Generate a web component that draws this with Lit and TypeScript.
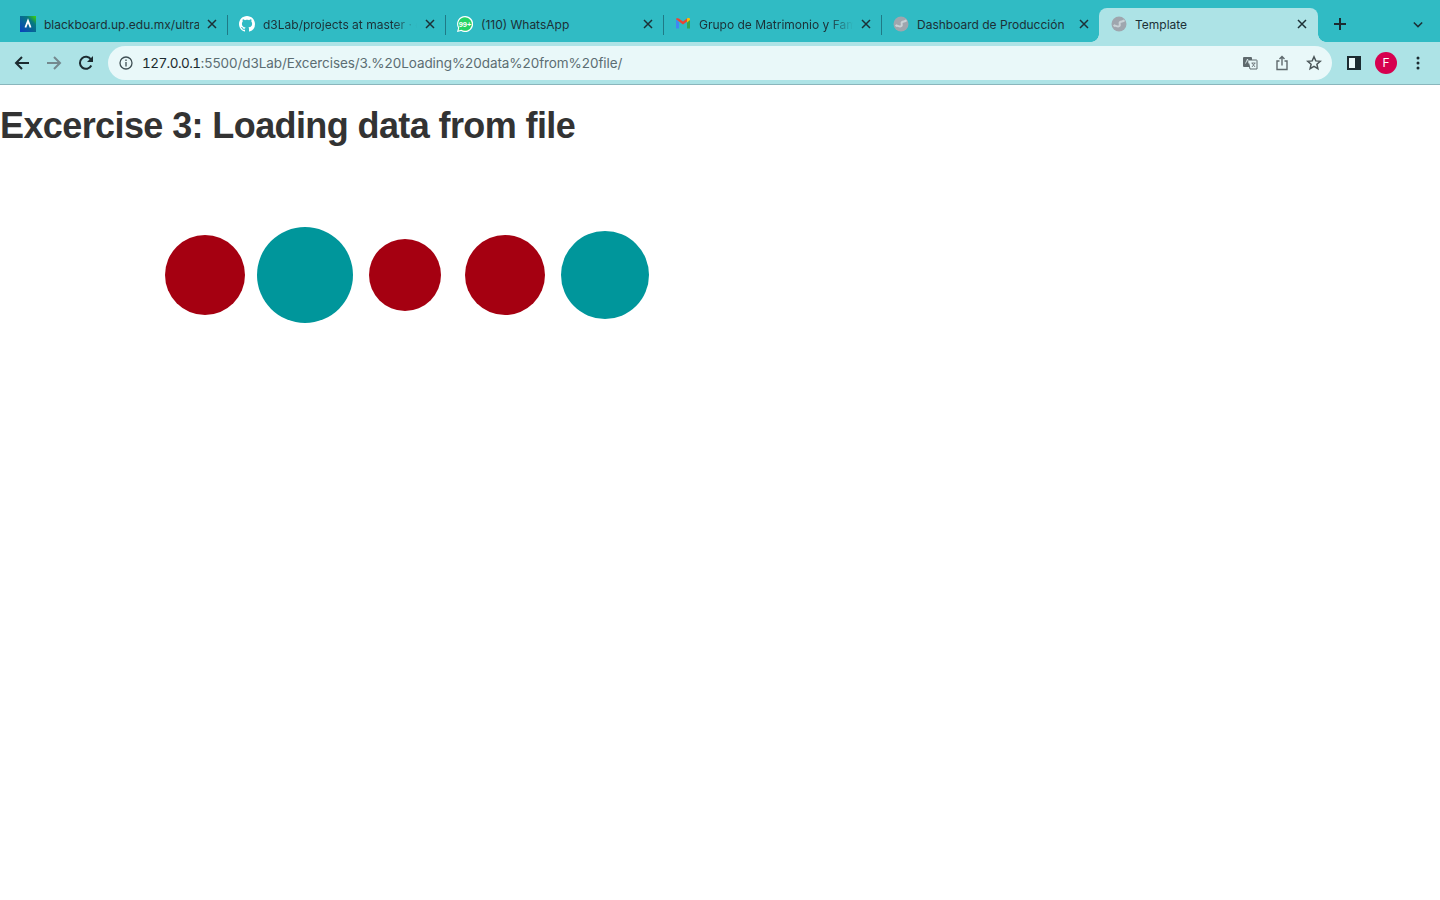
import { LitElement, html, css, svg } from 'lit';
import { customElement } from 'lit/decorators.js';
import { classMap } from 'lit/directives/class-map.js';

const blackboardIcon = html`<svg viewBox="0 0 16 16" width="16" height="16">
  <defs>
    <linearGradient id="bb" x1="0" y1="1" x2="1" y2="0">
      <stop offset="0" stop-color="#0a3fc0" />
      <stop offset="0.7" stop-color="#067a80" />
      <stop offset="1" stop-color="#3fd800" />
    </linearGradient>
  </defs>
  <rect width="16" height="16" fill="url(#bb)" />
  <path d="M5.400 11.500 8 4.800l2.600 6.700" fill="none" stroke="#fff" stroke-width="1.800" />
</svg>`;

const githubIcon = html`<svg viewBox="0 0 16 16" width="16" height="16">
  <path
    fill="#fff"
    d="M8 0C3.58 0 0 3.58 0 8c0 3.54 2.29 6.53 5.47 7.59.4.07.55-.17.55-.38 0-.19-.01-.82-.01-1.49-2.01.37-2.53-.49-2.69-.94-.09-.23-.48-.94-.82-1.13-.28-.15-.68-.52-.01-.53.63-.01 1.08.58 1.23.82.72 1.21 1.87.87 2.33.66.07-.52.28-.87.51-1.07-1.78-.2-3.64-.89-3.64-3.95 0-.87.31-1.59.82-2.15-.08-.2-.36-1.02.08-2.12 0 0 .67-.21 2.2.82.64-.18 1.32-.27 2-.27.68 0 1.36.09 2 .27 1.53-1.04 2.2-.82 2.2-.82.44 1.1.16 1.92.08 2.12.51.56.82 1.27.82 2.15 0 3.07-1.87 3.75-3.65 3.95.29.25.54.73.54 1.48 0 1.07-.01 1.93-.01 2.2 0 .21.15.46.55.38A8.013 8.013 0 0016 8c0-4.42-3.58-8-8-8z"
  />
</svg>`;

const whatsappIcon = html`<svg viewBox="0 0 16 16" width="16" height="16">
  <path d="M8 0a8 8 0 0 0-6.900 12L0 16l4.100-1.100A8 8 0 1 0 8 0z" fill="#fff" />
  <path d="M8 1.200a6.800 6.800 0 0 0-5.700 10.500l-.7 2.700 2.700-.7A6.800 6.800 0 1 0 8 1.200z" fill="#25d366" />
  <text x="8" y="10.600" text-anchor="middle" font-family="Liberation Sans" font-size="7.500" font-weight="700" fill="#fff">99+</text>
</svg>`;

const gmailIcon = html`<svg viewBox="0 0 16 16" width="16" height="16">
  <path d="M1 3.200v9.300h3V6.400z" fill="#4285f4" />
  <path d="M12 6.400v6.100h3V3.200z" fill="#34a853" />
  <path d="M1 3.200 8 8.600l4-3.100V2.600l-4 3-2.800-2.200C3.600 2 1 2 1 3.200z" fill="#ea4335" />
  <path d="M12 2.600v3.800l3-2.300V3.200c0-1-1.600-1.600-3-.6z" fill="#fbbc04" />
</svg>`;

const globeIcon = html`<svg viewBox="0 0 16 16" width="16" height="16">
  <circle cx="8" cy="8" r="7.500" fill="#9fa6ae" />
  <path
    d="M13.500 4.200C12 5.800 10.500 5.200 9 6.200 7.800 7 9.500 8.600 8.500 10 7.500 11.300 5 9.800 3.600 9.400l-1 .8"
    fill="none"
    stroke="#c9d2d6"
    stroke-width="2"
  />
</svg>`;

interface Tab {
  title: string;
  icon: unknown;
  active?: boolean;
  fade?: boolean;
}

const tabs: Tab[] = [
  { title: 'blackboard.up.edu.mx/ultra', icon: blackboardIcon },
  { title: 'd3Lab/projects at master · d3Lab', icon: githubIcon, fade: true },
  { title: '(110) WhatsApp', icon: whatsappIcon },
  { title: 'Grupo de Matrimonio y Familia', icon: gmailIcon, fade: true },
  { title: 'Dashboard de Producción', icon: globeIcon },
  { title: 'Template', icon: globeIcon, active: true },
];

const circles = [
  { cx: 205, r: 40, fill: '#a50011' },
  { cx: 305, r: 48, fill: '#00969b' },
  { cx: 405, r: 36, fill: '#a50011' },
  { cx: 505, r: 40, fill: '#a50011' },
  { cx: 605, r: 44, fill: '#00969b' },
];

@customElement('app-root')
export class AppRoot extends LitElement {
  static styles = css`
    :host {
      display: block;
      min-height: 900px;
      background: #fff;
      font-family: Inter, 'Liberation Sans', sans-serif;
    }

    /* Tab strip */
    .strip {
      display: flex;
      align-items: flex-end;
      height: 42px;
      padding-left: 9px;
      background: #30bbc4;
      box-sizing: border-box;
    }
    .tab {
      position: relative;
      display: flex;
      align-items: center;
      flex: none;
      width: 218px;
      height: 34px;
      padding: 0 10px 2px 11px;
      box-sizing: border-box;
      color: #1c3036;
      font-size: 12px;
    }
    .tab + .tab {
      padding-left: 12px;
    }
    .tab + .tab::before {
      content: '';
      position: absolute;
      left: 0;
      top: 7px;
      height: 20px;
      width: 1px;
      background: #1f7a86;
    }
    .tab.active {
      width: 219px;
      padding-right: 11px;
      background: #ade3e6;
      border-radius: 8px 8px 0 0;
    }
    .tab.active::before,
    .tab.active::after {
      content: '';
      position: absolute;
      bottom: 0;
      top: auto;
      width: 8px;
      height: 8px;
      background: radial-gradient(circle at 0 0, #30bbc4 7.5px, #ade3e6 8px);
    }
    .tab.active::before {
      left: -8px;
    }
    .tab.active::after {
      right: -8px;
      background: radial-gradient(circle at 100% 0, #30bbc4 7.5px, #ade3e6 8px);
    }
    .favicon {
      display: flex;
      flex: none;
      width: 16px;
      height: 16px;
      margin-right: 8px;
    }
    .title {
      flex: 1;
      min-width: 0;
      white-space: nowrap;
      overflow: hidden;
    }
    .title.fade {
      -webkit-mask-image: linear-gradient(to right, #000 calc(100% - 24px), transparent);
      mask-image: linear-gradient(to right, #000 calc(100% - 24px), transparent);
    }
    .close {
      display: flex;
      flex: none;
      width: 10px;
      height: 10px;
      margin-left: 8px;
    }
    .strip-end {
      display: flex;
      align-items: center;
      flex: 1;
      height: 34px;
      padding: 0 17px 2px 15px;
      box-sizing: border-box;
      justify-content: space-between;
    }

    /* Toolbar */
    .toolbar {
      display: flex;
      align-items: center;
      height: 43px;
      padding: 0 12px 1px 12px;
      box-sizing: border-box;
      background: #ade3e6;
      border-bottom: 1px solid #89b6bc;
    }
    .nav {
      display: flex;
      align-items: center;
      gap: 12px;
      margin-right: 12px;
    }
    .btn {
      display: flex;
      align-items: center;
      justify-content: center;
      width: 20px;
      height: 20px;
    }
    .omnibox {
      display: flex;
      align-items: center;
      flex: 1;
      height: 34px;
      padding: 0 8px 0 10px;
      border-radius: 17px;
      background: #e9f8f9;
      font-size: 13.5px;
      letter-spacing: -0.07px;
      color: #5c6d72;
    }
    .url {
      flex: 1;
      margin-left: 8px;
      white-space: nowrap;
    }
    .url b {
      font-weight: 400;
      color: #1c2b30;
      font-feature-settings: 'tnum';
      letter-spacing: -0.55px;
    }
    .omni-actions {
      display: flex;
      gap: 12px;
    }
    .side {
      display: flex;
      align-items: center;
      gap: 11px;
      margin-left: 12px;
    }
    .avatar {
      display: flex;
      align-items: center;
      justify-content: center;
      width: 22px;
      height: 22px;
      border-radius: 50%;
      background: #d6004f;
      color: #fff;
      font-size: 12px;
    }

    /* Page */
    h1 {
      margin: 0;
      padding-top: 18px;
      font-family: 'Liberation Sans', Arial, sans-serif;
      font-size: 36px;
      font-weight: 700;
      line-height: 45px;
      letter-spacing: -0.6px;
      color: #333;
    }
    .chart {
      display: block;
      margin-top: 60px;
    }
  `;

  private renderTab(tab: Tab) {
    return html`<div class=${classMap({ tab: true, active: !!tab.active })}>
      <span class="favicon">${tab.icon}</span>
      <span class=${classMap({ title: true, fade: !!tab.fade })}>${tab.title}</span>
      <span class="close">
        <svg viewBox="0 0 10 10" width="10" height="10">
          <path d="M1 1l8 8M9 1l-8 8" stroke="#1c3036" stroke-width="1.500" fill="none" />
        </svg>
      </span>
    </div>`;
  }

  render() {
    return html`
      <div class="strip">
        ${tabs.map((t) => this.renderTab(t))}
        <div class="strip-end">
          <svg viewBox="0 0 14 14" width="14" height="14">
            <path d="M7 1v12M1 7h12" stroke="#1c2b30" stroke-width="2" fill="none" />
          </svg>
          <svg viewBox="0 0 12 8" width="10" height="7">
            <path d="M1 1.500l5 5 5-5" stroke="#1c3036" stroke-width="1.800" fill="none" />
          </svg>
        </div>
      </div>
      <div class="toolbar">
        <div class="nav">
          <span class="btn">
            <svg viewBox="0 0 16 16" width="16" height="16">
              <path d="M15 8H2M8 2 2 8l6 6" stroke="#1c2b30" stroke-width="2" fill="none" />
            </svg>
          </span>
          <span class="btn">
            <svg viewBox="0 0 16 16" width="16" height="16">
              <path d="M1 8h13M8 2l6 6-6 6" stroke="#74898e" stroke-width="2" fill="none" />
            </svg>
          </span>
          <span class="btn">
            <svg viewBox="0 0 16 16" width="16" height="16">
              <path d="M13.300 10.500A6 6 0 1 1 13 4.600" stroke="#1c2b30" stroke-width="2" fill="none" />
              <path d="M15 1v6H9z" fill="#1c2b30" />
            </svg>
          </span>
        </div>
        <div class="omnibox">
          <svg viewBox="0 0 16 16" width="16" height="16">
            <circle cx="8" cy="8" r="6" stroke="#3f4f54" stroke-width="1.300" fill="none" />
            <path d="M8 7v4.500M8 4.500v1.500" stroke="#3f4f54" stroke-width="1.300" fill="none" />
          </svg>
          <span class="url"><b>127.0.0.1</b>:5500/d3Lab/Excercises/3.%20Loading%20data%20from%20file/</span>
          <div class="omni-actions">
            <span class="btn">
              <svg viewBox="0 0 16 16" width="16" height="16">
                <rect x="1" y="2" width="9" height="10" rx="1" fill="#5f6a6e" />
                <path d="M6 5h8.500a.5.5 0 0 1 .5.5V14H8z" fill="#e9f8f9" stroke="#5f6a6e" />
                <path d="M3.500 8.500 5.500 4 7 8.500" stroke="#e9f8f9" stroke-width=".8" fill="none" />
                <path d="M9.500 8h4M10 8l3 4M13 8l-3 4" stroke="#5f6a6e" stroke-width=".8" fill="none" />
              </svg>
            </span>
            <span class="btn">
              <svg viewBox="0 0 16 16" width="16" height="16">
                <path d="M5.500 6H3v8.500h10V6h-2.500M8 10.500V1.500M5.500 4 8 1.500 10.500 4" stroke="#5f6a6e" stroke-width="1.400" fill="none" />
              </svg>
            </span>
            <span class="btn">
              <svg viewBox="0 0 16 16" width="16" height="16">
                <path d="M8 1.800l1.800 4.100 4.500.4-3.400 3 1 4.400L8 11.400l-3.900 2.300 1-4.400-3.400-3 4.500-.4z" stroke="#4a5558" stroke-width="1.500" fill="none" />
              </svg>
            </span>
          </div>
        </div>
        <div class="side">
          <span class="btn">
            <svg viewBox="0 0 14 14" width="14" height="14">
              <rect x="1" y="1" width="12" height="12" fill="#e9f8f9" stroke="#1c2b30" stroke-width="2" />
              <rect x="8" y="1" width="5" height="12" fill="#1c2b30" />
            </svg>
          </span>
          <span class="avatar">F</span>
          <span class="btn">
            <svg viewBox="0 0 4 14" width="4" height="14">
              <circle cx="2" cy="2" r="1.500" fill="#1c2b30" />
              <circle cx="2" cy="7" r="1.500" fill="#1c2b30" />
              <circle cx="2" cy="12" r="1.500" fill="#1c2b30" />
            </svg>
          </span>
        </div>
      </div>
      <h1>Excercise 3: Loading data from file</h1>
      <svg class="chart" width="700" height="200">
        ${circles.map((c) => svg`<circle cx=${c.cx} cy="67" r=${c.r} fill=${c.fill}></circle>`)}
      </svg>
    `;
  }
}
